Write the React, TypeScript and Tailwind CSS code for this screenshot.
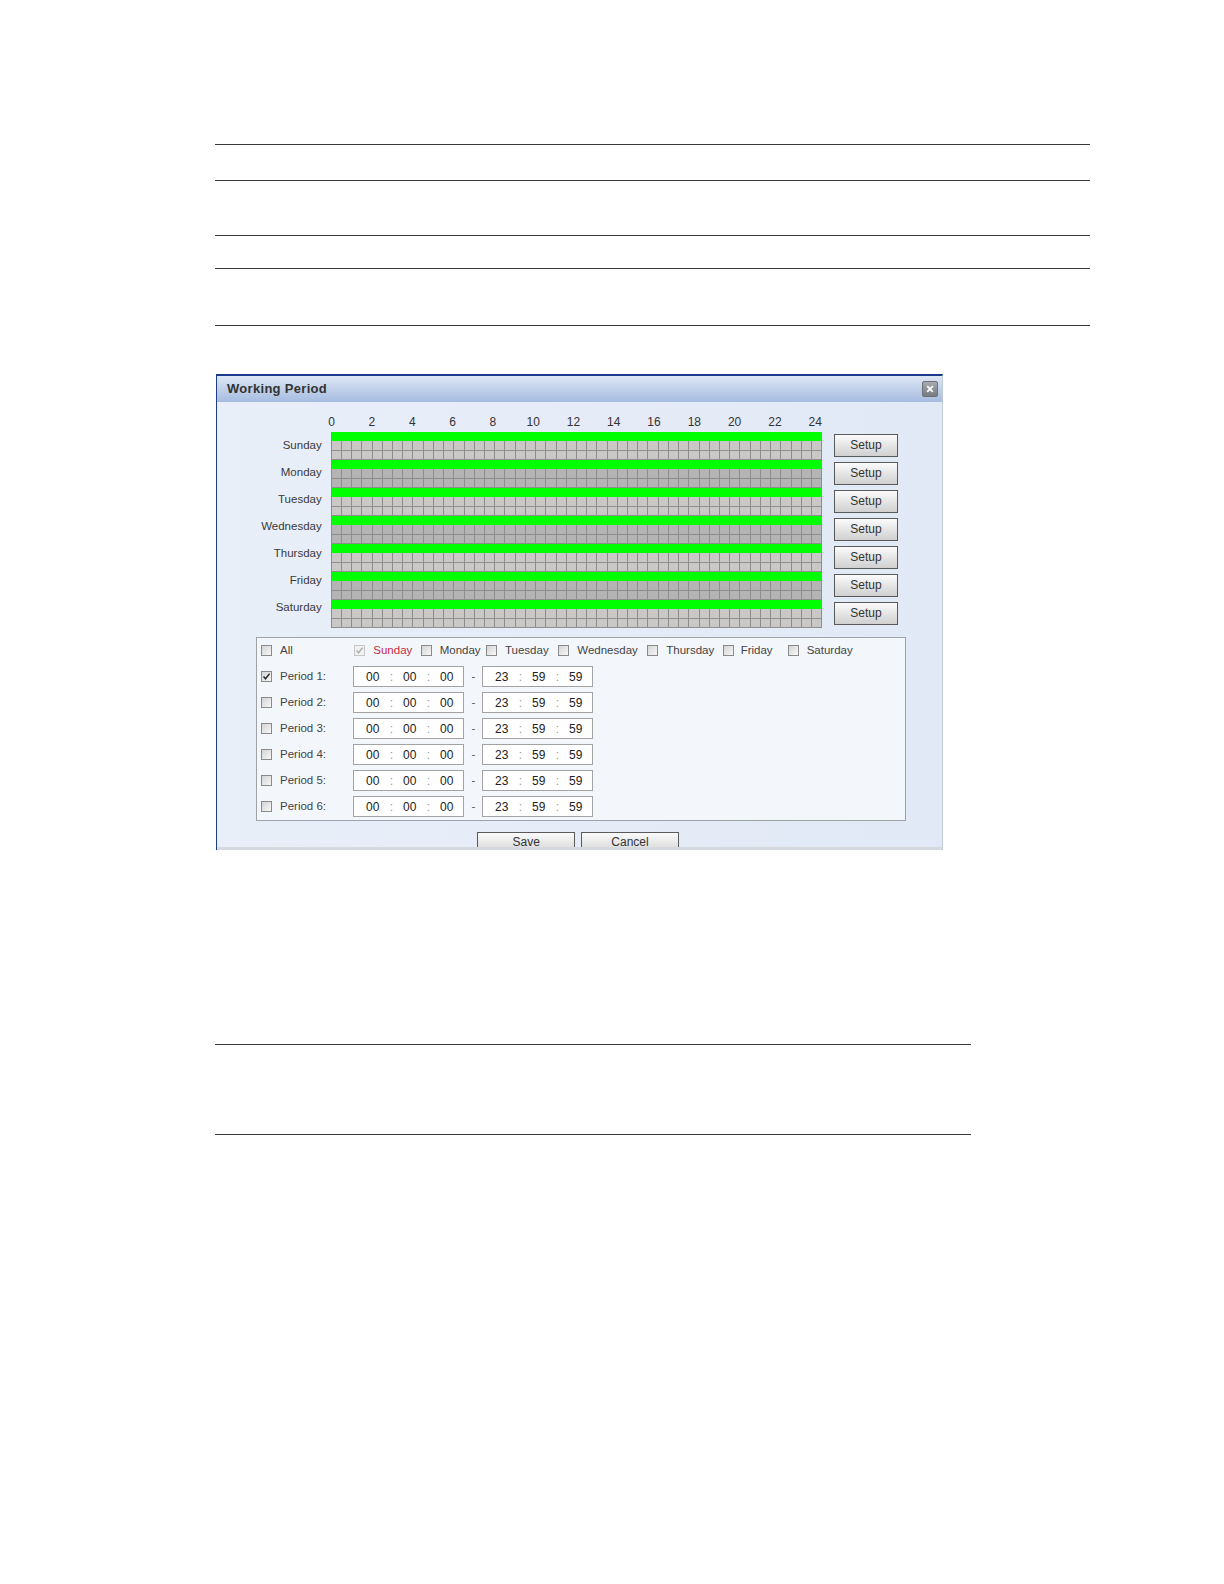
import React from 'react';

const DAYS = ['Sunday', 'Monday', 'Tuesday', 'Wednesday', 'Thursday', 'Friday', 'Saturday'];
const HOURS = [0, 2, 4, 6, 8, 10, 12, 14, 16, 18, 20, 22, 24];
const CELLS = Array.from({ length: 48 }, (_, i) => i);

const DAY_ITEMS = [
  { label: 'Sunday', w: 'w-[66.4px]', checked: true, disabled: true },
  { label: 'Monday', w: 'w-[65.3px]' },
  { label: 'Tuesday', w: 'w-[72.3px]' },
  { label: 'Wednesday', w: 'w-[89px]' },
  { label: 'Thursday', w: 'w-[75.4px]' },
  { label: 'Friday', w: 'w-[65px]', gap: 'ml-[7px]' },
  { label: 'Saturday', w: 'w-[100px]' },
];

function Checkbox({ checked = false, disabled = false }: { checked?: boolean; disabled?: boolean }) {
  return (
    <div
      className={
        disabled
          ? 'w-[11px] h-[11px] shrink-0 border border-[#c6c6c6] bg-[#f2f2f2] flex items-center justify-center'
          : 'w-[11px] h-[11px] shrink-0 border border-[#8a8a8a] bg-gradient-to-br from-[#d4d4d4] to-[#f8f8f8] flex items-center justify-center'
      }
    >
      {checked && (
        <svg width="9" height="9" viewBox="0 0 9 9">
          <polyline
            points="1.5,4.5 3.5,6.8 7.6,1.6"
            fill="none"
            stroke={disabled ? '#b0b0b0' : '#2a2a2a'}
            strokeWidth="1.5"
          />
        </svg>
      )}
    </div>
  );
}

function TimeBox({ a, b, c }: { a: string; b: string; c: string }) {
  return (
    <div className="w-[111px] h-[21px] border border-[#a3a3a3] bg-white flex items-center pl-[4px] text-[12px] text-[#222]">
      <span className="w-[29px] text-center">{a}</span>
      <span className="w-[8px] text-center text-[#999]">:</span>
      <span className="w-[29px] text-center">{b}</span>
      <span className="w-[8px] text-center text-[#999]">:</span>
      <span className="w-[29px] text-center">{c}</span>
    </div>
  );
}

function GrayRow({ dark }: { dark: boolean }) {
  return (
    <div className={`flex h-[9.5px] border-l border-[#8e8e8e] ${dark ? 'bg-[#b4b4b4]' : 'bg-[#cac7c7]'}`}>
      {CELLS.map((i) => (
        <div key={i} className="flex-1 border-r border-b border-[#8e8e8e]" />
      ))}
    </div>
  );
}

function DialogButton({ label, w }: { label: string; w: string }) {
  return (
    <div
      className={`${w} h-[23px] border border-[#5a5a5a] bg-gradient-to-b from-[#fbfbfb] to-[#d2d2d2] text-[12px] text-[#333] flex justify-center`}
    >
      <span className="leading-[14px] pt-[2.5px]">{label}</span>
    </div>
  );
}

export default function App() {
  return (
    <div className="w-[1224px] min-h-[1584px] bg-white flex flex-col font-['Liberation_Sans',Arial,sans-serif]">
      <div className="mt-[144px] ml-[215px] w-[875px] h-px bg-[#3a3a3a]" />
      <div className="mt-[34.5px] ml-[215px] w-[875px] h-px bg-[#3a3a3a]" />
      <div className="mt-[54.5px] ml-[215px] w-[875px] h-px bg-[#3a3a3a]" />
      <div className="mt-[32px] ml-[215px] w-[875px] h-px bg-[#3a3a3a]" />
      <div className="mt-[56px] ml-[215px] w-[875px] h-px bg-[#3a3a3a]" />

      {/* dialog */}
      <div className="mt-[48px] ml-[216px] w-[727px] flex flex-col border-t-2 border-t-[#1b3a8c] border-l border-l-[#1f3c88] border-r border-r-[#c3cbd8]">
        <div className="h-[26px] bg-gradient-to-b from-[#dde6f4] to-[#a6bce0] flex items-start justify-between pl-[10px] pr-[4px]">
          <span className="text-[13px] font-bold text-[#333] tracking-[0.3px] leading-[26px]">Working Period</span>
          <div className="mt-[5px] w-[16px] h-[16px] rounded-[2px] border border-[#6d7075] bg-gradient-to-b from-[#a8abb0] to-[#777b80] flex items-center justify-center">
            <svg width="8" height="8" viewBox="0 0 8 8">
              <path d="M1.2 1.2 L6.8 6.8 M6.8 1.2 L1.2 6.8" stroke="#fff" strokeWidth="1.8" />
            </svg>
          </div>
        </div>

        <div className="h-[445px] overflow-hidden bg-gradient-to-r from-[#e9eff9] to-[#e1e9f6] flex flex-col">
          {/* hour labels */}
          <div className="mt-[13px] ml-[94.5px] flex h-[14px] text-[12px] leading-[14px] text-[#333]">
            {HOURS.map((h) => (
              <span key={h} className="w-[40.3px] text-center">
                {h}
              </span>
            ))}
          </div>

          {/* schedule grid */}
          <div className="mt-[3px] flex">
            <div className="w-[104.7px] pt-[6px] flex flex-col text-right text-[11.5px] leading-[14px] text-[#3a3a3a]">
              {DAYS.map((d) => (
                <div key={d} className="h-[27.05px]">
                  {d}
                </div>
              ))}
            </div>
            <div className="ml-[9px] w-[491.6px] flex flex-col">
              {DAYS.map((d, i) => (
                <div key={d} className="h-[28px] flex flex-col">
                  <div className="h-[9px] bg-[#00ff00] border-l border-[#8e8e8e]" />
                  <GrayRow dark={i % 2 === 1} />
                  <GrayRow dark={i % 2 === 1} />
                </div>
              ))}
            </div>
            <div className="ml-[11.7px] flex flex-col">
              {DAYS.map((d) => (
                <div key={d} className="h-[28px] pt-[1.6px]">
                  <div className="w-[64px] h-[23px] border border-[#5a5a5a] bg-gradient-to-b from-[#fbfbfb] to-[#d0d0d0] text-[12px] text-[#333] flex items-center justify-center">
                    Setup
                  </div>
                </div>
              ))}
            </div>
          </div>

          {/* period box */}
          <div className="mt-[8.5px] ml-[39px] w-[650px] h-[184px] border border-[#9fa3a8] bg-[#f3f7fc] flex flex-col pl-[4px] text-[11.5px] text-[#444]">
            <div className="flex items-center h-[26px]">
              <div className="w-[93.3px] flex items-center">
                <Checkbox />
                <span className="ml-[8px]">All</span>
              </div>
              {DAY_ITEMS.map((it) => (
                <div key={it.label} className={`${it.w} flex items-center`}>
                  <Checkbox checked={it.checked} disabled={it.disabled} />
                  <span className={`${it.gap ?? 'ml-[8px]'} ${it.label === 'Sunday' ? 'text-[#c72b3c]' : ''}`}>
                    {it.label}
                  </span>
                </div>
              ))}
            </div>
            {[1, 2, 3, 4, 5, 6].map((p) => (
              <div key={p} className="flex items-center h-[26px]">
                <div className="w-[92.3px] flex items-center">
                  <Checkbox checked={p === 1} />
                  <span className="ml-[8px]">Period {p}:</span>
                </div>
                <TimeBox a="00" b="00" c="00" />
                <span className="w-[18px] text-center text-[#555]">-</span>
                <TimeBox a="23" b="59" c="59" />
              </div>
            ))}
          </div>

          {/* buttons */}
          <div className="mt-[11px] ml-[260.3px] flex gap-[5.7px]">
            <DialogButton label="Save" w="w-[98px]" />
            <DialogButton label="Cancel" w="w-[98px]" />
          </div>
        </div>
        <div className="h-[3px] bg-[#d6d9de]" />
      </div>

      <div className="mt-[194px] ml-[215px] w-[756px] h-px bg-[#3a3a3a]" />
      <div className="mt-[89px] ml-[215px] w-[756px] h-px bg-[#3a3a3a]" />
    </div>
  );
}
